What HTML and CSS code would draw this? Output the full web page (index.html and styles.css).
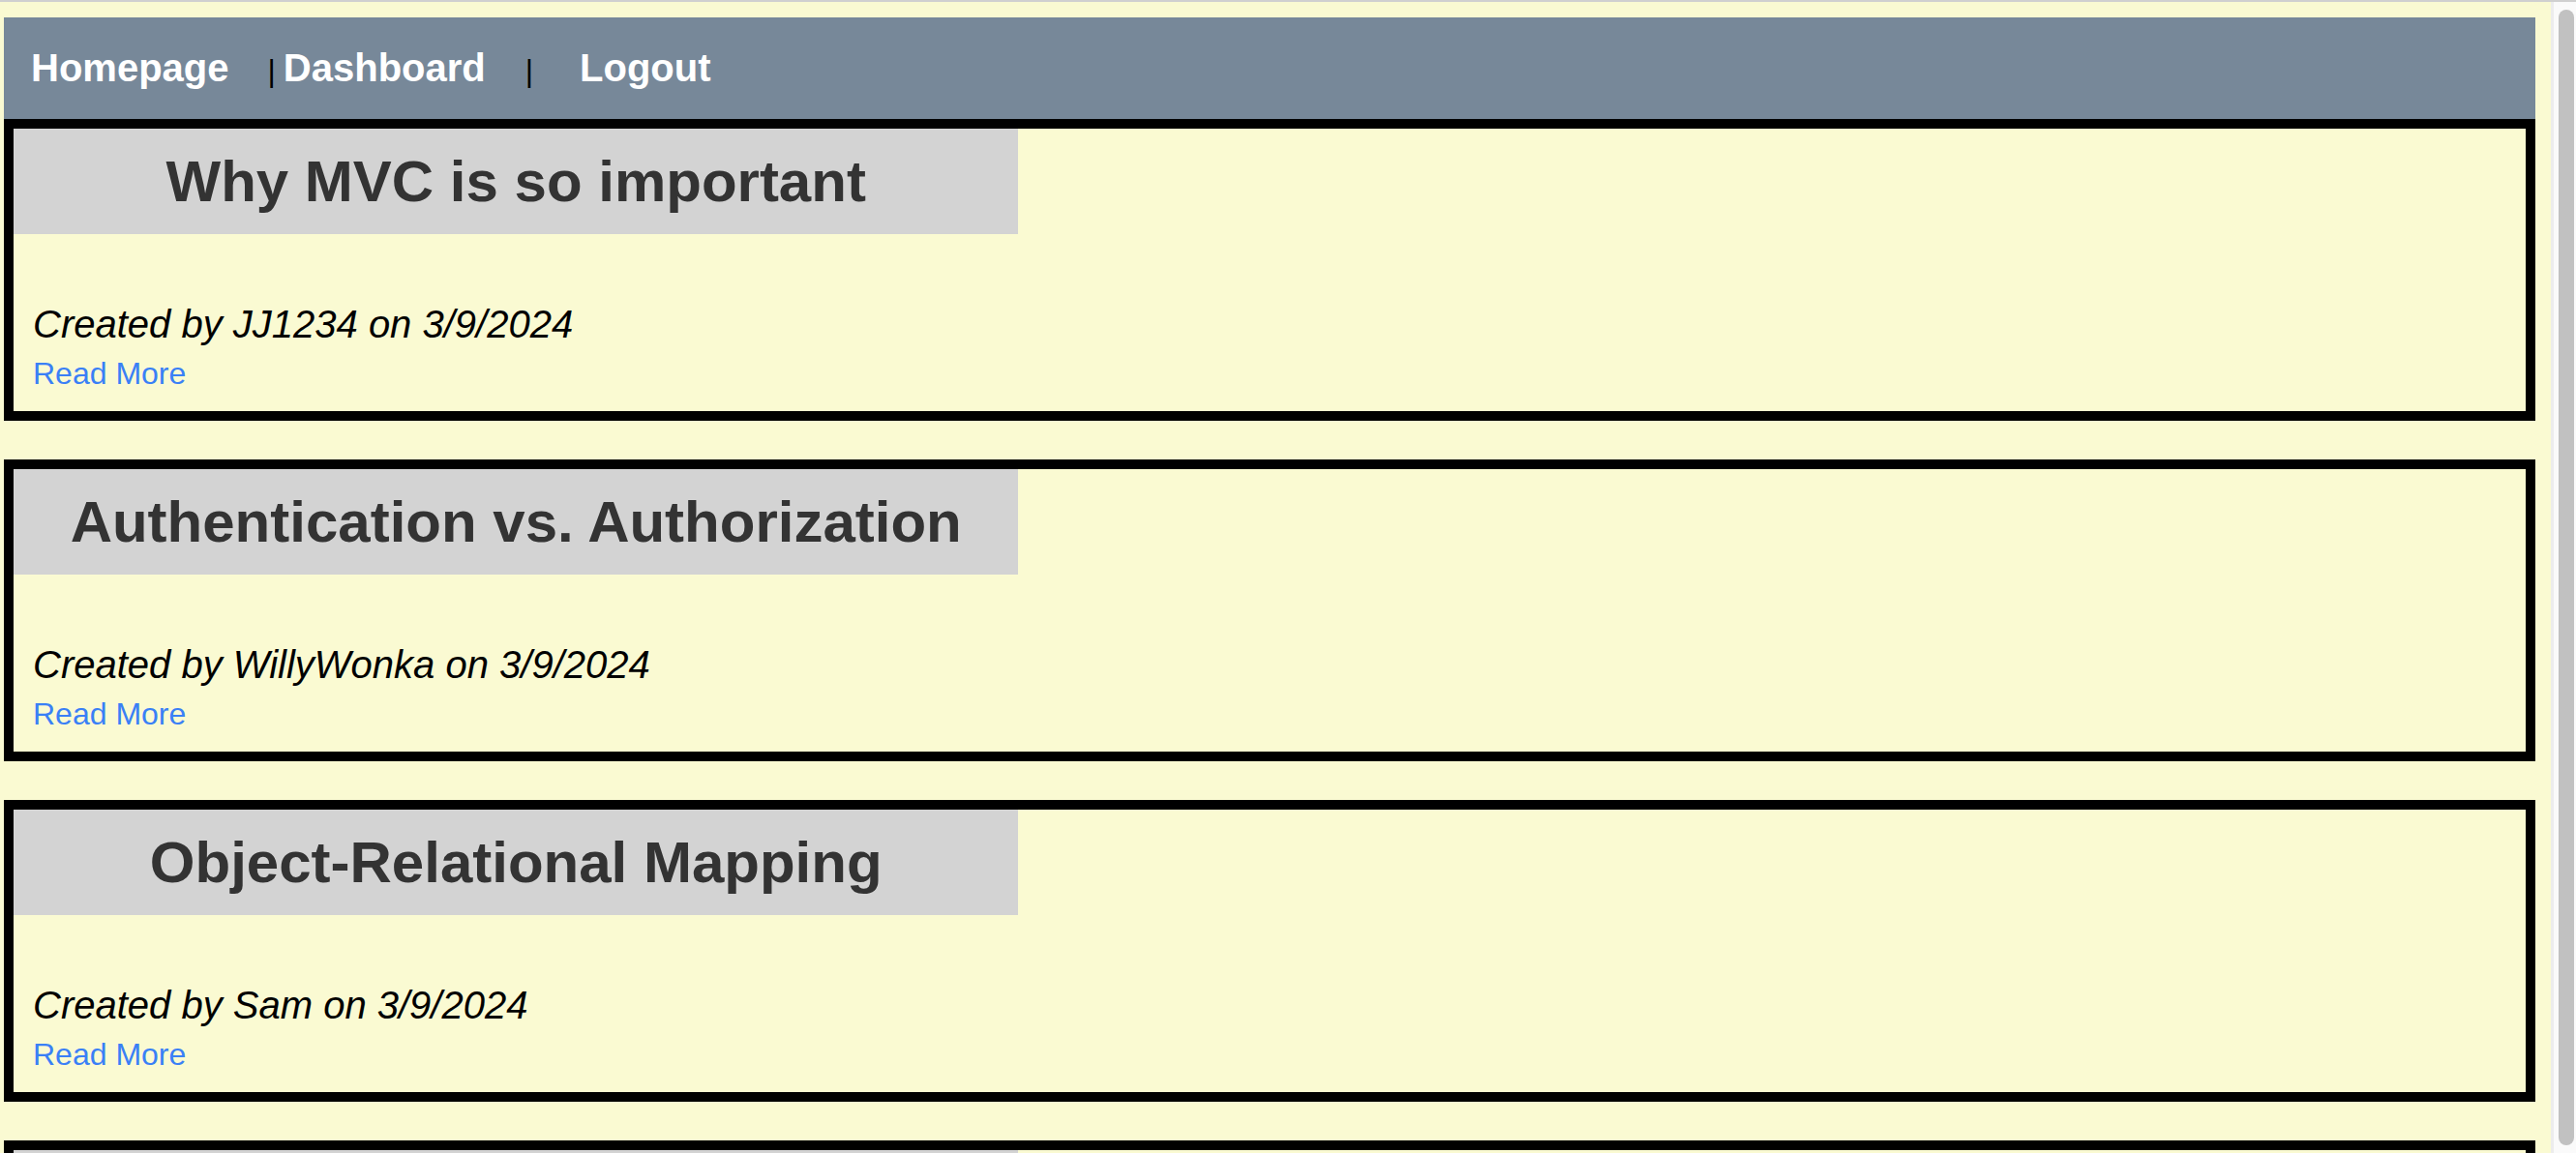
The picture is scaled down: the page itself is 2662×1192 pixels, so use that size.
FILE: index.html
```html
<!DOCTYPE html>
<html lang="en">
<head>
<meta charset="utf-8">
<title>Tech Blog</title>
<link rel="stylesheet" href="styles.css">
</head>
<body>
<div class="chrome-line"></div>
<div class="viewport">
  <main class="page">
    <nav class="topnav">
      <a class="nav-link" href="#">Homepage</a>
      <span class="sep sep-first">|</span>
      <a class="nav-link" href="#">Dashboard</a>
      <span class="sep sep-second">|</span>
      <a class="nav-link" href="#">Logout</a>
    </nav>
    <section class="posts">
      <article class="post">
        <h2 class="post-title">Why MVC is so important</h2>
        <p class="post-meta">Created by JJ1234 on 3/9/2024</p>
        <a class="read-more" href="#">Read More</a>
      </article>
      <article class="post">
        <h2 class="post-title">Authentication vs. Authorization</h2>
        <p class="post-meta">Created by WillyWonka on 3/9/2024</p>
        <a class="read-more" href="#">Read More</a>
      </article>
      <article class="post">
        <h2 class="post-title">Object-Relational Mapping</h2>
        <p class="post-meta">Created by Sam on 3/9/2024</p>
        <a class="read-more" href="#">Read More</a>
      </article>
      <article class="post">
        <h2 class="post-title">Sessions and Cookies</h2>
        <p class="post-meta">Created by JJ1234 on 3/9/2024</p>
        <a class="read-more" href="#">Read More</a>
      </article>
    </section>
  </main>
  <div class="scrollbar">
    <div class="scroll-thumb"></div>
  </div>
</div>
</body>
</html>
```
FILE: styles.css
```css
html, body {
  margin: 0;
  padding: 0;
  height: 100%;
}

body {
  display: flex;
  flex-direction: column;
  overflow: hidden;
  background: #fafad2;
  font-family: "Liberation Sans", Arial, sans-serif;
}

.chrome-line {
  height: 2px;
  flex: 0 0 2px;
  background: #d0d0d0;
}

.viewport {
  flex: 1;
  display: flex;
  min-height: 0;
}

.page {
  flex: 1;
  min-width: 0;
  overflow: hidden;
  padding: 16px 16px 0 4px;
}

.topnav {
  display: flex;
  align-items: baseline;
  height: 105px;
  box-sizing: border-box;
  padding: 29px 0 0 28px;
  background: #778899;
  line-height: 46px;
}

.nav-link {
  color: #ffffff;
  font-weight: bold;
  font-size: 40px;
  text-decoration: none;
}

.sep {
  color: #000000;
  font-size: 32px;
}

.sep-first {
  margin: 0 8px 0 40px;
}

.sep-second {
  margin: 0 48px 0 41px;
}

.post {
  border: 10px solid #000000;
  padding-bottom: 20px;
  margin-bottom: 40px;
}

.post-title {
  width: 40%;
  margin: 0;
  padding: 20px 0;
  background: #d3d3d3;
  color: #333333;
  font-size: 60px;
  line-height: 69px;
  font-weight: bold;
  text-align: center;
}

.post-meta {
  margin: 70px 0 0;
  padding-left: 20px;
  font-style: italic;
  font-size: 40px;
  line-height: 46px;
  color: #000000;
}

.read-more {
  display: inline-block;
  margin: 10px 0 0 20px;
  font-size: 32px;
  line-height: 37px;
  color: #3a80f6;
  text-decoration: none;
  vertical-align: top;
}

.scrollbar {
  flex: 0 0 26px;
  width: 26px;
  box-sizing: border-box;
  border-left: 3px solid #ececec;
  background: #fafafa;
  padding: 8px 2px 8px 5px;
  display: flex;
  flex-direction: column;
}

.scroll-thumb {
  flex: 1;
  background: #c1c1c1;
  border-radius: 8px;
}
```
